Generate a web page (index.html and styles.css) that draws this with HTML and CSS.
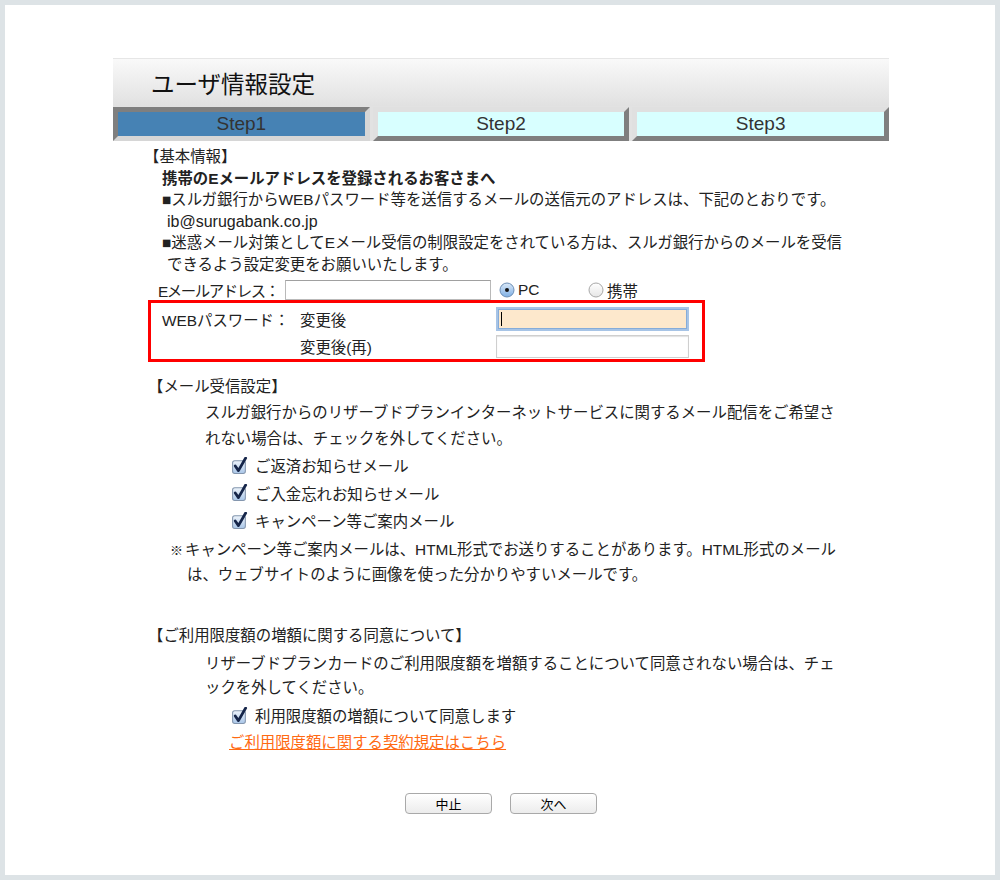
FILE: index.html
```html
<!DOCTYPE html>
<html lang="ja">
<head>
    <meta charset="UTF-8">
    <title>ユーザ情報設定</title>
    <link rel="stylesheet" href="styles.css">
</head>
<body>
    <svg class="defs" width="0" height="0">
        <defs>
            <linearGradient id="cbFill" x1="0" y1="0" x2="0" y2="1">
                <stop offset="0" stop-color="#eef4fb"/>
                <stop offset="1" stop-color="#a9c6e8"/>
            </linearGradient>
            <linearGradient id="radioOn" x1="0" y1="0" x2="0" y2="1">
                <stop offset="0" stop-color="#dbe9f8"/>
                <stop offset="1" stop-color="#7eafe4"/>
            </linearGradient>
            <linearGradient id="radioOff" x1="0" y1="0" x2="0" y2="1">
                <stop offset="0" stop-color="#ffffff"/>
                <stop offset="1" stop-color="#e6e6e6"/>
            </linearGradient>
        </defs>
    </svg>

    <div class="frame">
        <div class="page">
            <div class="header">ユーザ情報設定</div>
            <div class="steps">
                <div class="step current">Step1</div>
                <div class="step">Step2</div>
                <div class="step">Step3</div>
            </div>

            <!-- 基本情報 -->
            <div class="basic">
                <div class="sec-title">【基本情報】</div>
                <div class="lead">携帯のEメールアドレスを登録されるお客さまへ</div>
                <div class="bullet">■スルガ銀行からWEBパスワード等を送信するメールの送信元のアドレスは、下記のとおりです。</div>
                <div class="cont latin">ib@surugabank.co.jp</div>
                <div class="bullet">■迷惑メール対策としてEメール受信の制限設定をされている方は、スルガ銀行からのメールを受信</div>
                <div class="cont">できるよう設定変更をお願いいたします。</div>
            </div>

            <div class="email-row">
                <span class="email-label">Eメールアドレス：</span>
                <input type="text" class="email-input">
                <span class="radio-opt pc">
                    <svg class="radio" viewBox="0 0 16 16" width="16" height="16">
                        <circle cx="8" cy="8" r="7" fill="url(#radioOn)" stroke="#6d8fb6"/>
                        <circle cx="8" cy="8" r="2" fill="#111"/>
                    </svg>PC
                </span>
                <span class="radio-opt">
                    <svg class="radio" viewBox="0 0 16 16" width="16" height="16">
                        <circle cx="8" cy="8" r="7" fill="url(#radioOff)" stroke="#a8a8a8"/>
                    </svg>携帯
                </span>
            </div>

            <div class="pw-box">
                <span class="pw-label">WEBパスワード：</span>
                <span class="pw-sub">変更後</span>
                <span class="caret-wrap"><input type="password" class="pw-input focused"></span>
                <span></span>
                <span class="pw-sub">変更後(再)</span>
                <input type="password" class="pw-input">
            </div>

            <!-- メール受信設定 -->
            <div class="sec-title mail-title">【メール受信設定】</div>
            <div class="para">スルガ銀行からのリザーブドプランインターネットサービスに関するメール配信をご希望さ<br>れない場合は、チェックを外してください。</div>
            <div class="check-row">
                <svg class="cb" viewBox="0 0 16 16" width="17" height="17"><rect x="1.5" y="3.5" width="12" height="12" rx="2" fill="url(#cbFill)" stroke="#8496ae"/><path d="M4 8.4 L7 12.8 L13.8 1" fill="none" stroke="#16264a" stroke-width="2.6" stroke-linecap="round" stroke-linejoin="round"/></svg>
                <span>ご返済お知らせメール</span>
            </div>
            <div class="check-row">
                <svg class="cb" viewBox="0 0 16 16" width="17" height="17"><rect x="1.5" y="3.5" width="12" height="12" rx="2" fill="url(#cbFill)" stroke="#8496ae"/><path d="M4 8.4 L7 12.8 L13.8 1" fill="none" stroke="#16264a" stroke-width="2.6" stroke-linecap="round" stroke-linejoin="round"/></svg>
                <span>ご入金忘れお知らせメール</span>
            </div>
            <div class="check-row">
                <svg class="cb" viewBox="0 0 16 16" width="17" height="17"><rect x="1.5" y="3.5" width="12" height="12" rx="2" fill="url(#cbFill)" stroke="#8496ae"/><path d="M4 8.4 L7 12.8 L13.8 1" fill="none" stroke="#16264a" stroke-width="2.6" stroke-linecap="round" stroke-linejoin="round"/></svg>
                <span>キャンペーン等ご案内メール</span>
            </div>
            <div class="note"><span class="mark">※</span>キャンペーン等ご案内メールは、HTML形式でお送りすることがあります。HTML形式のメール<br>は、ウェブサイトのように画像を使った分かりやすいメールです。</div>

            <!-- ご利用限度額 -->
            <div class="sec-title limit-title">【ご利用限度額の増額に関する同意について】</div>
            <div class="para limit-para">リザーブドプランカードのご利用限度額を増額することについて同意されない場合は、チェ<br>ックを外してください。</div>
            <div class="check-row limit-check">
                <svg class="cb" viewBox="0 0 16 16" width="17" height="17"><rect x="1.5" y="3.5" width="12" height="12" rx="2" fill="url(#cbFill)" stroke="#8496ae"/><path d="M4 8.4 L7 12.8 L13.8 1" fill="none" stroke="#16264a" stroke-width="2.6" stroke-linecap="round" stroke-linejoin="round"/></svg>
                <span>利用限度額の増額について同意します</span>
            </div>
            <div class="link-row"><a href="#">ご利用限度額に関する契約規定はこちら</a></div>

            <div class="buttons">
                <button>中止</button>
                <button>次へ</button>
            </div>
        </div>
    </div>
</body>
</html>
```

FILE: styles.css
```css
body {
    margin: 0;
    padding: 5px;
    background-color: #dde3e6;
    font-family: "Liberation Sans", "Noto Sans CJK JP", sans-serif;
    font-size: 15.4px;
    color: #222;
}
.defs {
    position: absolute;
}
.frame {
    height: 870px;
    background-color: #fff;
    overflow: hidden;
}
.page {
    width: 776px;
    margin-left: 108px;
    padding-top: 53px;
}
.header {
    height: 47px;
    border-top: 1px solid #e6e6e6;
    background: linear-gradient(#f9f9f9, #e1e1e1);
    display: flex;
    align-items: center;
    padding-left: 38px;
    font-size: 23.5px;
    color: #111;
}
.steps {
    display: grid;
    grid-template-columns: repeat(3, 1fr);
    column-gap: 3px;
    padding-top: 1px;
    background-color: #e2e2e2;
}
.step {
    height: 34px;
    box-sizing: border-box;
    border: 5px solid;
    border-color: #e0e0e0 #7f7f7f #7f7f7f #e0e0e0;
    background-color: #d8ffff;
    text-align: center;
    line-height: 24px;
    font-size: 19px;
    color: #333;
}
.step.current {
    border-color: #7f7f7f #d6d6d6 #d6d6d6 #7f7f7f;
    background-color: #4682b4;
}
.basic {
    margin-top: 5px;
    line-height: 21.6px;
}
.basic .sec-title {
    margin-left: 31px;
}
.lead {
    margin-left: 49px;
    font-weight: bold;
}
.bullet {
    margin-left: 49px;
}
.cont {
    margin-left: 54px;
}
.latin {
    font-size: 16px;
}
.email-row {
    display: flex;
    align-items: center;
    height: 20px;
    margin-top: 4px;
    margin-left: 45px;
}
.email-label {
    flex: none;
    width: 127px;
    white-space: nowrap;
    letter-spacing: -1.4px;
}
.email-input {
    flex: none;
    width: 206px;
    height: 20px;
    box-sizing: border-box;
    border: 1px solid #b9b9b9;
    border-top-color: #a0a0a0;
    margin: 0;
}
.radio-opt {
    display: flex;
    align-items: center;
    gap: 3px;
    width: 89px;
}
.radio-opt.pc {
    margin-left: 8px;
}
.pw-box {
    width: 557px;
    box-sizing: border-box;
    margin-left: 35px;
    border: 3px solid #f00;
    padding: 3px 0 0 11px;
    display: grid;
    grid-template-columns: 138px 196px 193px;
    grid-template-rows: 26px 25px;
    row-gap: 2px;
    align-items: center;
}
.pw-input {
    width: 193px;
    height: 23px;
    box-sizing: border-box;
    margin: 0;
    border: 1px solid #cfcfcf;
    box-shadow: inset 0 1px 1px #e2e2e2;
}
.caret-wrap {
    position: relative;
    display: block;
    padding: 2px;
    height: 20px;
}
.pw-input.focused {
    display: block;
    width: 189px;
    height: 20px;
    background-color: #fde8cc;
    border: 1px solid #86acd9;
    box-shadow: 0 0 0 2px #a7c4e6;
}
.caret-wrap::after {
    content: "";
    position: absolute;
    left: 5px;
    top: 5px;
    width: 1px;
    height: 14px;
    background-color: #000;
}
.mail-title {
    margin-top: 14px;
    margin-left: 35px;
    line-height: 22px;
}
.para {
    margin-top: 2px;
    margin-left: 92px;
    line-height: 26px;
}
.check-row {
    display: flex;
    align-items: center;
    gap: 7px;
    height: 27.5px;
    margin-left: 118px;
}
.cb {
    flex: none;
}
.note {
    margin-top: 4px;
    margin-left: 74px;
    text-indent: -17px;
    line-height: 24px;
}
.mark {
    display: inline-block;
    width: 15px;
    text-indent: 0;
    font-size: 13px;
}
.limit-title {
    margin-top: 38px;
    margin-left: 35px;
    line-height: 22px;
}
.limit-para {
    margin-top: 5px;
    line-height: 24px;
}
.limit-check {
    height: 28px;
    margin-top: 1px;
}
.link-row {
    height: 28px;
    line-height: 28px;
    margin-left: 116px;
}
.link-row a {
    color: #ff6a13;
}
.buttons {
    display: flex;
    gap: 18px;
    margin-top: 36px;
    margin-left: 292px;
}
button {
    width: 87px;
    height: 21px;
    padding: 0;
    border: 1px solid #a9a9a9;
    border-radius: 4px;
    background: linear-gradient(#ffffff, #ececec);
    font-family: "Liberation Sans", "Noto Sans CJK JP", sans-serif;
    font-size: 13px;
    color: #000;
}
```
